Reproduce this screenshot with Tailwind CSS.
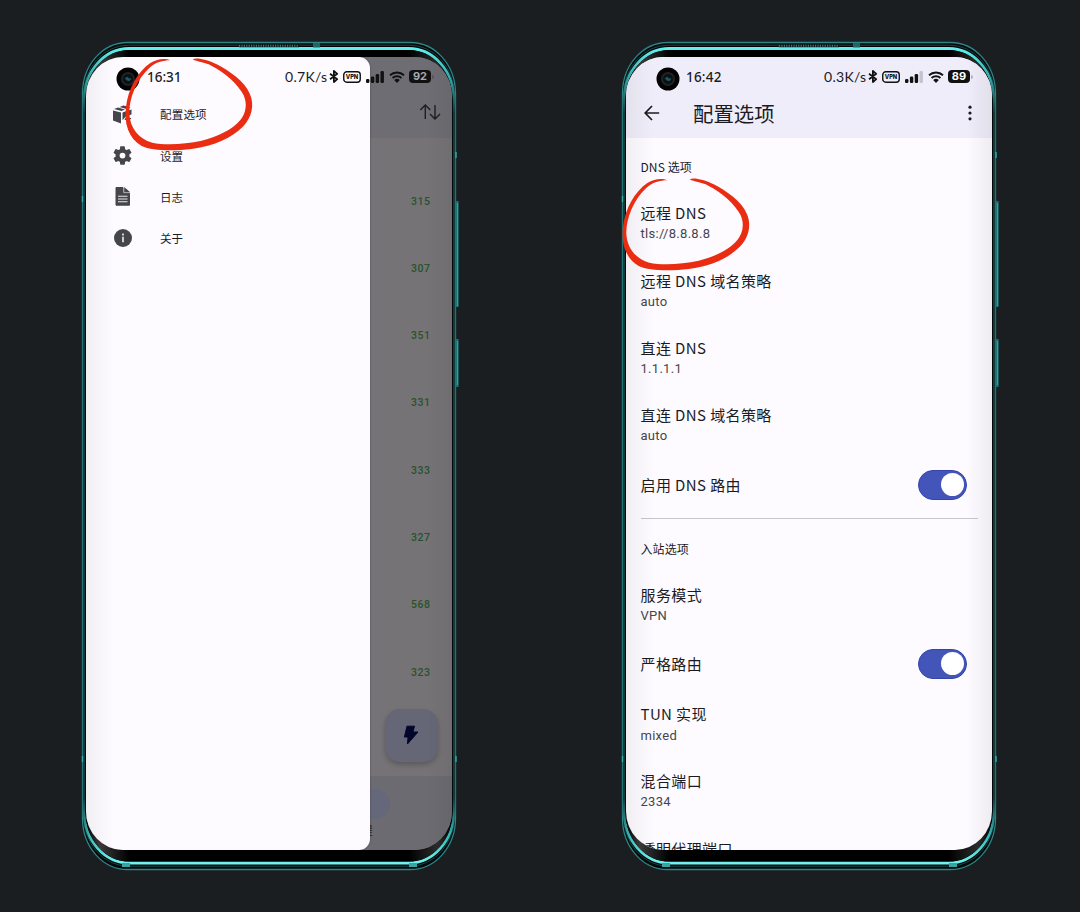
<!DOCTYPE html>
<html lang="zh-CN">
<head>
<meta charset="utf-8">
<title>DNS</title>
<script src="https://cdn.jsdelivr.net/npm/@tailwindcss/browser@4"></script>
</head>
<body class="w-[1080px] h-[912px] overflow-hidden bg-[#1a1e20] font-['Noto_Sans_CJK_SC',sans-serif] text-[#1b1b1f]">

<svg width="0" height="0" class="absolute">
  <defs>
    <linearGradient id="rim" x1="0" y1="0" x2="0" y2="1">
      <stop offset="0" stop-color="#62efec"/><stop offset=".03" stop-color="#38b5b4"/><stop offset=".08" stop-color="#103c3e"/>
      <stop offset=".92" stop-color="#103c3e"/><stop offset=".97" stop-color="#3cc0be"/><stop offset="1" stop-color="#72f2ee"/>
    </linearGradient>
    <linearGradient id="shineL" x1="0" y1="0" x2="1" y2="0">
      <stop offset="0" stop-color="#000"/><stop offset=".04" stop-color="#3a3a3a"/><stop offset=".12" stop-color="#000"/>
      <stop offset=".88" stop-color="#000"/><stop offset=".96" stop-color="#2c2c2c"/><stop offset="1" stop-color="#000"/>
    </linearGradient>
    <symbol id="frame" viewBox="0 0 382 832">
      <rect x="3.5" y="2.5" width="373" height="827" rx="45" ry="51" fill="#06090a" stroke="#2b8586" stroke-width="1.3"/>
      <rect x="4.3" y="5.2" width="371.4" height="821" rx="45" ry="51" fill="#050505" stroke="#164648" stroke-width="1"/>
      <rect x="5.3" y="8.5" width="369.4" height="814.5" rx="45" ry="51" fill="#000" stroke="url(#rim)" stroke-width="2.8"/>
      <rect x="6.2" y="10" width="367.6" height="811.5" rx="44" ry="50" fill="url(#shineL)"/>
      <path d="M160 5.7h60" stroke="#071011" stroke-width="3"/>
      <path d="M160 5.7h60" stroke="#47797a" stroke-width="2" stroke-dasharray="1.2 1.2"/>
      <rect x="234" y="3" width="7" height="4.5" fill="#216565"/>
      <rect x="43" y="823" width="8" height="4" fill="#38a5a3"/><rect x="330" y="823" width="8" height="4" fill="#38a5a3"/>
      <path d="M3.5 156v6M3.5 716v6M377 112v6M377 716v6" stroke="#35aaa8" stroke-width="1.4"/>
      <path d="M378.3 161v106M378.3 299v48" stroke="#1b6f70" stroke-width="2.6"/>
      <path d="M378.5 163v103M378.5 301v44" stroke="#27a3a1" stroke-width="1.2"/>
    </symbol>
    <symbol id="camera" viewBox="0 0 24 24">
      <circle cx="12" cy="12" r="11.5" fill="#030303"/><circle cx="12" cy="12" r="7" fill="#202225"/>
      <circle cx="12" cy="12" r="5" fill="#0b1113"/><path d="M8.6 11.2l3-1.5 1 1.5 3 .4-2.2 2.6-2.6-.7z" fill="#1c5963"/>
    </symbol>
    <symbol id="bt" viewBox="0 0 10 13"><path d="M1 3.7l7.2 5.4L4.9 12V1l3.3 2.9L1 9.3" fill="none" stroke="#111" stroke-width="1.8" stroke-linejoin="round"/></symbol>
    <symbol id="vpn" viewBox="0 0 18 12">
      <rect x=".75" y=".75" width="16.5" height="10.5" rx="3" fill="none" stroke="#111" stroke-width="1.4"/>
      <text x="9" y="8.3" text-anchor="middle" font-family="Inter,sans-serif" font-weight="800" font-size="6.2" textLength="12.5" lengthAdjust="spacingAndGlyphs" fill="#111">VPN</text>
    </symbol>
    <symbol id="wifi" viewBox="0 0 16 12">
      <path d="M1 4.2a10.2 10.2 0 0 1 14 0M3.6 7a6.4 6.4 0 0 1 8.8 0" fill="none" stroke="#111" stroke-width="2"/>
      <path d="M8 12L5.2 9.1a4 4 0 0 1 5.6 0z" fill="#111"/>
    </symbol>
    <symbol id="ring" viewBox="0 0 200 120">
      <path transform="scale(.33333)" fill="#e92c12" d="M286 76C272 69 248 70 226 84C188 110 160 160 153 215C147 265 160 309 200 333C232 349 300 348 350 342C420 333 470 309 505 274C530 248 539 210 525 178C510 140 462 107 425 88C395 74 366 67 353 73C366 81 388 81 409 92C450 113 490 148 506 181C518 208 512 236 496 255C472 284 430 304 380 317C330 328 270 331 232 323C190 311 165 278 163 236C162 190 185 135 222 100C240 82 265 76 286 76Z"/>
    </symbol>
  </defs>
</svg>

<div class="grid grid-cols-2">

  <section class="relative ml-[79px] mt-[40px] h-[832px] w-[382px] pl-[7px] pt-[17px]">
    <svg class="absolute left-0 top-0 h-[832px] w-[382px]"><use href="#frame"/></svg>
    <div class="relative h-[793px] w-[366px] overflow-hidden rounded-[37px/39px] bg-[#767377]">
      <!-- dimmed page -->
      <div class="flex h-full flex-col">
        <div class="flex h-[81px] shrink-0 items-end justify-end bg-[#6e6d73] pb-[17px] pr-[11px]">
          <svg width="22" height="18" viewBox="0 0 22 18" fill="none" stroke="#1f1e22" stroke-width="1.4"><path d="M6.3 16V2M1.3 7l5-5 5 5M16 2v14M11 11l5 5 5-5"/></svg>
        </div>
        <div class="flex grow flex-col items-end pr-[21.5px] pt-[29.5px] font-[Roboto] text-[10.5px] font-medium tracking-[.5px] text-[#27532b]">
          <div class="h-[67.3px] leading-[67px]">315</div>
          <div class="h-[67.3px] leading-[67px]">307</div>
          <div class="h-[67.3px] leading-[67px]">351</div>
          <div class="h-[67.3px] leading-[67px]">331</div>
          <div class="h-[67.3px] leading-[67px]">333</div>
          <div class="h-[67.3px] leading-[67px]">327</div>
          <div class="h-[67.3px] leading-[67px]">568</div>
          <div class="h-[67.3px] leading-[67px]">323</div>
        </div>
        <div class="h-[74px] shrink-0 bg-[#6c6b72] pl-[250px] pt-[13px]">
          <div class="h-[30px] w-[54px] rounded-full bg-[#65677a]"></div>
          <div class="mt-[3px] pl-[25px] text-[11.5px] leading-[16px] text-[#19191d]">程</div>
        </div>
      </div>
      <div class="absolute left-[299px] top-[652px] flex h-[53px] w-[53px] items-center justify-center rounded-[15px] bg-[#666776] shadow-[0_3px_5px_rgba(0,0,0,.22)]">
        <svg class="-mt-[2px] -ml-px" width="16" height="20" viewBox="0 0 16 20"><path d="M4 1.2h7.5L10 7h5L4.5 19 5 12H1.4z" fill="#03062c" stroke="#03062c" stroke-linejoin="round"/></svg>
      </div>
      <!-- drawer -->
      <nav class="absolute left-0 top-0 h-full w-[284px] rounded-r-[11px] bg-[#fdfbff] pt-[37px] text-[11.5px] text-[#1b1b1f] shadow-[0_0_2px_rgba(0,0,0,.4)]">
        <div class="flex h-[41.3px] items-center pl-[27px]">
          <svg width="20" height="20" viewBox="0 0 20 20" fill="#45464c"><path d="M0 5.5l8 2v11l-8-3zM9.5 7.5L13 6.2v5l-3.5 4zM1 4l4-1.4 7 2L8.5 6zM6.5 2l4-1.5 7 1.8-4 1.7zM14.5 6l4-1.6v5l-4 1zM12.5 13l4-3-1 3h3l-5 6 1-4h-3z"/></svg>
          <span class="ml-[27px] tracking-[.2px]">配置选项</span>
        </div>
        <div class="flex h-[41.3px] items-center pl-[25px]">
          <svg width="23" height="23" viewBox="0 0 24 24" fill="#45464c"><path d="M19.14 12.94c.04-.3.06-.61.06-.94 0-.32-.02-.64-.07-.94l2.03-1.58a.49.49 0 0 0 .12-.61l-1.92-3.32a.49.49 0 0 0-.59-.22l-2.39.96c-.5-.38-1.03-.7-1.62-.94l-.36-2.54a.48.48 0 0 0-.48-.41h-3.84c-.24 0-.43.17-.47.41l-.36 2.54c-.59.24-1.13.57-1.62.94l-2.39-.96c-.22-.08-.47 0-.59.22L2.74 8.87c-.12.21-.08.47.12.61l2.03 1.58c-.05.3-.09.63-.09.94s.02.64.07.94l-2.03 1.58a.49.49 0 0 0-.12.61l1.92 3.32c.12.22.37.29.59.22l2.39-.96c.5.38 1.03.7 1.62.94l.36 2.54c.05.24.24.41.48.41h3.84c.24 0 .44-.17.47-.41l.36-2.54c.59-.24 1.13-.56 1.62-.94l2.39.96c.22.08.47 0 .59-.22l1.92-3.32a.48.48 0 0 0-.12-.61l-2.01-1.58zM12 15A3 3 0 1 1 12 9a3 3 0 0 1 0 6z"/></svg>
          <span class="ml-[26px] pt-px">设置</span>
        </div>
        <div class="-mt-px flex h-[41.3px] items-center pl-[29px]">
          <svg width="16" height="19" viewBox="0 0 16 19"><path d="M1 .5h7v5.7h6.5v12H1z" fill="#45464c" stroke="#45464c" stroke-linejoin="round"/><path d="M9.2 0l6 5.2h-6z" fill="#45464c"/><path d="M3 9.3h9.5M3 12h9.5M3 14.7h9.5" stroke="#e9e8ec" stroke-width="1.1"/></svg>
          <span class="ml-[29px] pt-[2px]">日志</span>
        </div>
        <div class="flex h-[41.3px] items-center pl-[28px]">
          <svg width="18" height="18" viewBox="0 0 18 18"><circle cx="9" cy="9" r="9" fill="#45464c"/><path d="M9 7.8v5.4M9 4.4v2" stroke="#f2f1f5" stroke-width="1.6"/></svg>
          <span class="ml-[28px] pt-[2px]">关于</span>
        </div>
      </nav>
      <div class="absolute inset-y-0 left-0 w-[28px] bg-linear-to-r from-black/5 to-transparent"></div>
      <div class="absolute inset-y-0 right-0 w-[26px] bg-linear-to-l from-black/5 to-transparent"></div>
      <!-- status bar -->
      <div class="absolute left-0 top-[7.5px] flex h-[24px] w-[366px] items-center">
        <svg class="ml-[30px] mt-[4px] h-[24px] w-[24px]"><use href="#camera"/></svg>
        <span class="ml-[7px] w-[38px] font-['Noto_Sans'] text-[13.5px] font-medium leading-[24px]">16:31</span>
        <span class="ml-[100px] w-[44px] font-[Lato] text-[14px] leading-[20px] tracking-[.3px]">0.7K/s</span>
        <svg class="ml-0 h-[13px] w-[10px]"><use href="#bt"/></svg>
        <svg class="ml-[4px] h-[12px] w-[18px]"><use href="#vpn"/></svg>
        <svg class="ml-[5px]" width="18" height="12" fill="#111"><rect y="8" width="3.4" height="4" rx="1.2"/><rect x="4.9" y="5.5" width="3.4" height="6.5" rx="1.2"/><rect x="9.7" y="3" width="3.4" height="9" rx="1.2"/><rect x="14.5" width="3.4" height="12" rx="1.2"/></svg>
        <svg class="ml-[5px] h-[12px] w-[16px]"><use href="#wifi"/></svg>
        <span class="ml-[4px] h-[13px] w-[22px] rounded-[4px] bg-[#111] text-center font-[Inter] text-[11px] font-bold leading-[13px] text-[#aaa9ae]">92</span>
        <span class="ml-px h-[4px] w-[1.5px] rounded-r bg-[#55545a]"></span>
      </div>
    </div>
    <svg class="absolute left-[-4px] top-[-5px] h-[120px] w-[200px]"><use href="#ring"/></svg>
  </section>

  <section class="relative ml-[79px] mt-[40px] h-[832px] w-[382px] pl-[7px] pt-[17px]">
    <svg class="absolute left-0 top-0 h-[832px] w-[382px]"><use href="#frame"/></svg>
    <div class="relative h-[793px] w-[366px] overflow-hidden rounded-[37px/39px] bg-[#fdfbff]">
      <header class="h-[81px] bg-[#efedf9]">
        <div class="flex h-[39px] items-center">
          <svg class="ml-[30px] mt-[4px] h-[24px] w-[24px]"><use href="#camera"/></svg>
          <span class="ml-[6px] w-[40px] font-['Noto_Sans'] text-[13.5px] font-medium leading-[24px] tracking-[.2px]">16:42</span>
          <span class="ml-[98px] w-[44px] font-[Lato] text-[14px] leading-[20px] tracking-[.3px]">0.3K/s</span>
          <svg class="h-[13px] w-[10px]"><use href="#bt"/></svg>
          <svg class="ml-[4px] h-[12px] w-[18px]"><use href="#vpn"/></svg>
          <svg class="ml-[5px]" width="18" height="12" fill="#111"><rect y="8" width="3.4" height="4" rx="1.2"/><rect x="4.9" y="5.5" width="3.4" height="6.5" rx="1.2"/><rect x="9.7" y="3" width="3.4" height="9" rx="1.2"/><rect x="14.5" width="3.4" height="12" rx="1.2" fill="#c4c2cc"/></svg>
          <svg class="ml-[5px] h-[12px] w-[16px]"><use href="#wifi"/></svg>
          <span class="ml-[4px] h-[13px] w-[22px] rounded-[4px] bg-[#111] text-center font-[Inter] text-[11px] font-bold leading-[13px] text-white">89</span>
          <span class="ml-px h-[4px] w-[2px] rounded-r bg-[#b5b3bd]"></span>
        </div>
        <div class="flex h-[34px] items-center">
          <svg class="ml-[18px] -mt-px" width="16" height="16" viewBox="0 0 16 16" fill="none" stroke="#1b1b1f" stroke-width="1.7"><path d="M15.2 8H1.4M8 1L1.2 8 8 15"/></svg>
          <span class="ml-[33px] text-[20.4px] leading-[34px]">配置选项</span>
          <svg class="ml-[193px]" width="4" height="16" viewBox="0 0 4 16" fill="#1b1b1f"><circle cx="2" cy="2.2" r="1.6"/><circle cx="2" cy="8" r="1.6"/><circle cx="2" cy="13.8" r="1.6"/></svg>
        </div>
      </header>
      <main class="pl-[14.5px] text-[15px] tracking-[.4px]">
        <div class="pt-[19px] text-[12px] leading-[20px] tracking-[.1px]">DNS 选项</div>
        <div class="mt-[25.3px] h-[67.3px]"><p class="leading-[22px]">远程 DNS</p><p class="font-[Roboto] text-[13px] leading-[19.4px] tracking-[.28px] text-[#45464c]">tls://8.8.8.8</p></div>
        <div class="h-[67.3px]"><p class="leading-[22px]">远程 DNS 域名策略</p><p class="font-[Roboto] text-[13px] leading-[19.4px] tracking-[.28px] text-[#45464c]">auto</p></div>
        <div class="h-[67.3px]"><p class="leading-[22px]">直连 DNS</p><p class="font-[Roboto] text-[13px] leading-[19.8px] tracking-[.28px] text-[#45464c]">1.1.1.1</p></div>
        <div class="h-[60.3px]"><p class="leading-[22px]">直连 DNS 域名策略</p><p class="font-[Roboto] text-[13px] leading-[20px] tracking-[.28px] text-[#45464c]">auto</p></div>
        <div class="flex h-[46px] items-start justify-between pr-[25.5px] pt-[5px]"><p class="pt-[5px] leading-[22px]">启用 DNS 路由</p>
          <span class="mt-[.5px] flex h-[30px] w-[49px] items-center justify-end rounded-full border border-[#3344ab] bg-[#4355b9] pr-[2px]"><i class="h-[23px] w-[23px] rounded-full bg-white"></i></span></div>
        <div class="mr-[14px] mt-[7.5px] h-px bg-[#c7c5d0]"></div>
        <div class="mt-[20px] text-[12px] leading-[20px] tracking-[.1px]">入站选项</div>
        <div class="mt-[25px] h-[52px]"><p class="leading-[22px]">服务模式</p><p class="font-[Roboto] text-[13px] leading-[20px] tracking-[.28px] text-[#45464c]">VPN</p></div>
        <div class="flex h-[67px] items-start justify-between pr-[25.5px] pt-[13px]"><p class="pt-[4px] leading-[22px]">严格路由</p>
          <span class="flex h-[30px] w-[49px] items-center justify-end rounded-full border border-[#3344ab] bg-[#4355b9] pr-[2px]"><i class="h-[23px] w-[23px] rounded-full bg-white"></i></span></div>
        <div class="h-[67.3px]"><p class="leading-[22px]">TUN 实现</p><p class="font-[Roboto] text-[13px] leading-[21px] tracking-[.28px] text-[#45464c]">mixed</p></div>
        <div class="h-[67.3px]"><p class="leading-[22px]">混合端口</p><p class="font-[Roboto] text-[13px] leading-[20.6px] tracking-[.28px] text-[#45464c]">2334</p></div>
        <div><p class="leading-[22px]">透明代理端口</p></div>
      </main>
      <div class="absolute inset-y-0 left-0 w-[28px] bg-linear-to-r from-black/5 to-transparent"></div>
      <div class="absolute inset-y-0 right-0 w-[26px] bg-linear-to-l from-black/6 to-transparent"></div>
    </div>
    <svg class="absolute left-[-47.3px] top-[115px] h-[120px] w-[200px]"><use href="#ring"/></svg>
  </section>
</div>
</body>
</html>
